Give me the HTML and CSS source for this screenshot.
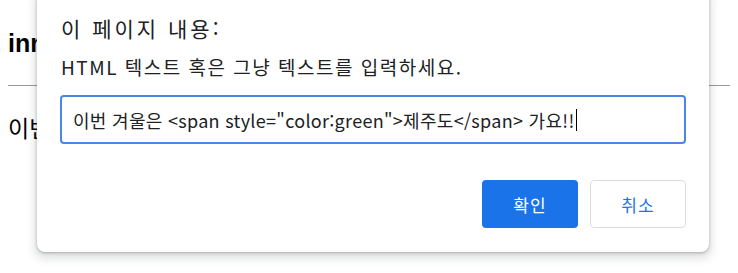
FILE: index.html
```html
<!DOCTYPE html>
<html lang="ko">
<head>
<meta charset="utf-8">
<link rel="stylesheet" href="styles.css">
</head>
<body>
<h2 class="page-title">innerHTML</h2>
<hr class="page-rule">
<p class="page-text">이번 겨울은 제주도 가요!!</p>

<div class="dialog">
  <div class="dialog-title">이 페이지 내용:</div>
  <div class="dialog-message">HTML 텍스트 혹은 그냥 텍스트를 입력하세요.</div>
  <div class="dialog-input"><span class="input-text">이번 겨울은 &lt;span style="color:green"&gt;제주도&lt;/span&gt; 가요!!</span><span class="caret"></span></div>
  <div class="dialog-buttons">
    <button class="btn btn-primary">확인</button>
    <button class="btn btn-secondary">취소</button>
  </div>
</div>
</body>
</html>
```

FILE: styles.css
```css
html, body {
  margin: 0;
  padding: 0;
  background: #fff;
}
body {
  padding: 8px;
  font-family: "Noto Sans", "Noto Sans CJK KR", sans-serif;
  color: #000;
  position: relative;
  height: 273px;
  box-sizing: border-box;
  overflow: hidden;
}
.page-title {
  font-family: "Liberation Sans", "Noto Sans CJK KR", sans-serif;
  font-size: 25px;
  font-weight: bold;
  margin: 21px 0 0;
  line-height: 28px;
}
.page-rule {
  margin: 28px 0 0;
  border: none;
  border-top: 1px solid #9a9a9a;
}
.page-text {
  font-family: "Noto Sans CJK KR", sans-serif;
  font-size: 23px;
  margin: 26px 0 0;
  line-height: 30px;
}
.dialog {
  position: absolute;
  left: 37px;
  top: -10px;
  width: 672px;
  height: 262px;
  box-sizing: border-box;
  background: #fff;
  border-radius: 8px;
  box-shadow: 0 1px 3px rgba(60,64,67,.35), 0 4px 8px 3px rgba(60,64,67,.15);
  padding: 24px 23px 0 23px;
  display: flex;
  flex-direction: column;
  font-family: "Noto Sans CJK KR", sans-serif;
}
.dialog-title {
  font-size: 21px;
  line-height: 28px;
  letter-spacing: 3px;
  color: #202124;
  margin-left: 1px;
}
.dialog-message {
  font-size: 19px;
  line-height: 24px;
  letter-spacing: 1.5px;
  color: #202124;
  margin: 13px 0 0 1px;
}
.dialog-input {
  margin-top: 16px;
  height: 49px;
  box-sizing: border-box;
  border: 2px solid #4a86e8;
  border-radius: 4px;
  display: flex;
  align-items: center;
  padding: 0 11px;
  font-size: 18px;
  letter-spacing: 0.3px;
  color: #202124;
  font-family: "Noto Sans CJK KR", sans-serif;
}
.caret {
  display: inline-block;
  width: 1px;
  height: 22px;
  background: #000;
  margin-left: 1px;
}
.dialog-buttons {
  margin-top: 36px;
  display: flex;
  justify-content: flex-end;
  gap: 12px;
}
.btn {
  width: 96px;
  height: 48px;
  border-radius: 4px;
  font-family: "Noto Sans CJK KR", sans-serif;
  font-size: 17px;
  letter-spacing: 1px;
  cursor: pointer;
  padding: 0;
}
.btn-primary {
  background: #1a73e8;
  color: #fff;
  border: none;
}
.btn-secondary {
  background: #fff;
  color: #1a73e8;
  border: 1px solid #dadce0;
}
```
